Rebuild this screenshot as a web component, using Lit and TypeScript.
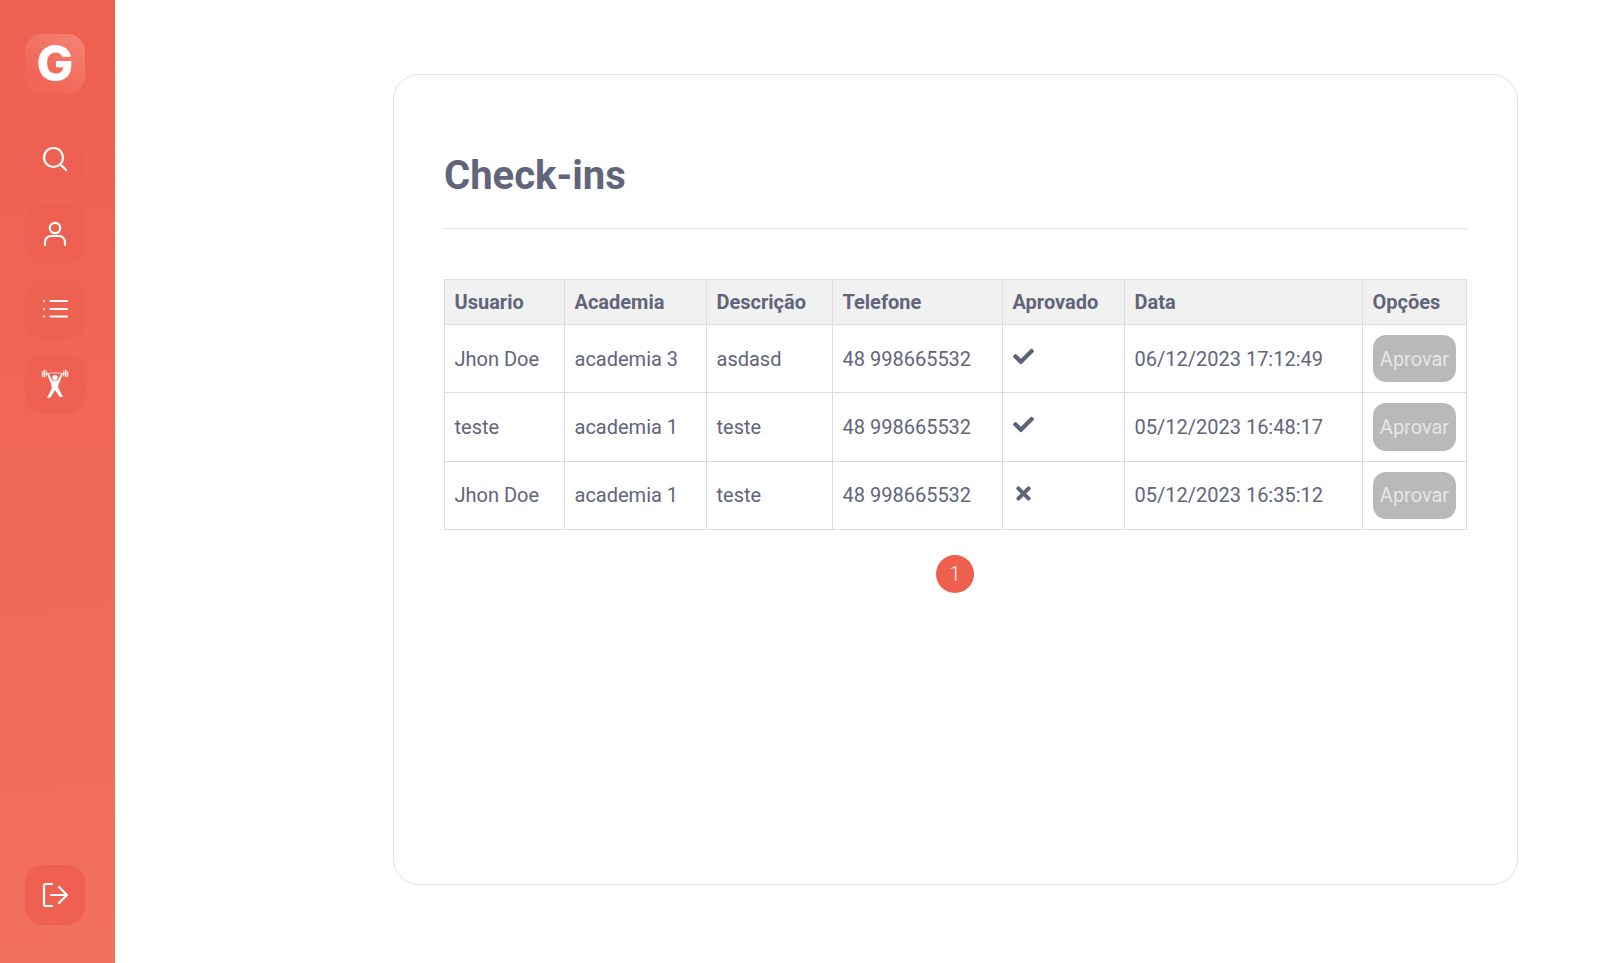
import { LitElement, css, html, svg } from 'lit'
import { customElement, property } from 'lit/decorators.js'

const icons = {
  search: svg`<circle cx="10.5" cy="10.5" r="9.5" /><line x1="17.5" y1="17.5" x2="23" y2="23" />`,
  user: svg`<circle cx="12" cy="6" r="5.2" /><path d="M2 23v-3a6 6 0 0 1 6-6h8a6 6 0 0 1 6 6v3" />`,
  list: svg`<line x1="7.5" y1="4" x2="24" y2="4" /><line x1="7.5" y1="12" x2="24" y2="12" /><line x1="7.5" y1="19.5" x2="24" y2="19.5" /><line x1="1" y1="4" x2="1.1" y2="4" /><line x1="1" y1="12" x2="1.1" y2="12" /><line x1="1" y1="19.5" x2="1.1" y2="19.5" />`,
  logout: svg`<path d="M9 1H3a2 2 0 0 0-2 2v18a2 2 0 0 0 2 2h6" /><line x1="8" y1="12" x2="23.5" y2="12" /><path d="M16 4l8 8-8 8" />`,
}

const gymIcon = svg`
  <g fill="#fff">
    <circle cx="15" cy="8.6" r="2.6" />
    <path d="M7 4.4h1.6l3.8 7.1h5.2l3.8-7.1H23l-4.3 10.6-.7 3.2 4.9 9.8h-3.2L15 21l-4.7 7.8H7.1l4.9-9.8-.7-3.2z" />
    <rect x="1.8" y="2.4" width="1" height="5.4" />
    <rect x="3.6" y="0.8" width="1.4" height="7.4" />
    <rect x="5.7" y="1.6" width="1" height="5.8" />
    <rect x="23.3" y="1.6" width="1" height="5.8" />
    <rect x="25" y="0.8" width="1.4" height="7.4" />
    <rect x="27.2" y="2.4" width="1" height="5.4" />
  </g>
  <path d="M3 4.8Q15 2.6 27 4.8" fill="none" stroke="#fff" stroke-opacity=".65" stroke-width="1" />
`

@customElement('side-button')
export class SideButton extends LitElement {
  static styles = css`
    :host {
      display: block;
    }
    .btn {
      display: flex;
      align-items: center;
      justify-content: center;
      width: 60px;
      height: 60px;
      border-radius: 18px;
      background: #ee6151;
    }
    svg {
      width: 24px;
      height: 24px;
      fill: none;
      stroke: #fff;
      stroke-width: 2.2;
      stroke-linecap: round;
      stroke-linejoin: round;
      overflow: visible;
    }
    .gym {
      width: 30px;
      height: 30px;
      stroke: none;
    }
  `
  @property({ type: String })
  icon = ''

  render() {
    const gym = this.icon === 'gym'
    return html`
      <div class="btn">
        ${gym
          ? html`<svg class="gym" viewBox="0 0 30 30">${gymIcon}</svg>`
          : html`<svg viewBox="0 0 24 24">${icons[this.icon as keyof typeof icons]}</svg>`}
      </div>
    `
  }
}

const rows = [
  { user: 'Jhon Doe', gym: 'academia 3', desc: 'asdasd', phone: '48 998665532', ok: true, date: '06/12/2023 17:12:49' },
  { user: 'teste', gym: 'academia 1', desc: 'teste', phone: '48 998665532', ok: true, date: '05/12/2023 16:48:17' },
  { user: 'Jhon Doe', gym: 'academia 1', desc: 'teste', phone: '48 998665532', ok: false, date: '05/12/2023 16:35:12' },
]

@customElement('app-root')
export class AppRoot extends LitElement {
  static styles = css`
    :host {
      display: block;
      font-family: Roboto, 'Liberation Sans', sans-serif;
      color: #61657b;
    }
    .page {
      display: flex;
      height: 963px;
      overflow: hidden;
      background: #fff;
    }
    .sidebar {
      box-sizing: border-box;
      flex: 0 0 115px;
      height: 100%;
      display: flex;
      flex-direction: column;
      align-items: flex-start;
      padding: 34px 0 38px 25px;
      background: linear-gradient(172deg, #ee6050 0%, #f2705e 100%);
    }
    .logo {
      display: flex;
      align-items: center;
      justify-content: center;
      width: 60px;
      height: 60px;
      margin-bottom: 35px;
      border-radius: 18px;
      background: linear-gradient(215deg, #f68474 0%, #f16556 75%);
      color: #fff;
      font-family: Inter, Roboto, sans-serif;
      font-size: 49px;
      font-weight: 800;
      line-height: 60px;
    }
    .nav {
      display: flex;
      flex-direction: column;
      gap: 15px;
      flex: 1;
    }
    .main {
      flex: 1;
      padding: 74px 83px 0 278px;
      min-width: 0;
    }
    .card {
      box-sizing: border-box;
      height: 811px;
      padding: 50px 50px 0;
      border: 1px solid #d9e5e6;
      border-radius: 26px;
    }
    .title {
      margin: 0;
      padding: 27px 0 28px;
      border-bottom: 1px solid #d9e5e6;
      font-size: 40px;
      line-height: 48px;
      font-weight: 700;
    }
    table {
      width: 1022px;
      margin-top: 50px;
      border-collapse: collapse;
      table-layout: fixed;
      font-size: 20px;
      line-height: 24px;
    }
    th,
    td {
      box-sizing: border-box;
      padding: 10px 10px 10px 9.5px;
      border: 1px solid #dcdcdc;
      text-align: left;
      vertical-align: middle;
    }
    th {
      background: #f1f1f1;
      font-weight: 700;
    }
    .c1 { width: 120px; }
    .c2 { width: 142px; }
    .c3 { width: 126px; }
    .c4 { width: 170px; }
    .c5 { width: 122px; }
    .c6 { width: 238px; }
    .c7 { width: 104px; }
    .mark {
      display: block;
      margin-top: -4px;
      width: 21px;
      height: 21px;
      fill: #5e6278;
    }
    .approve {
      display: block;
      box-sizing: border-box;
      width: 83px;
      height: 47.33px;
      margin-left: 0.5px;
      padding: 0;
      border: none;
      border-radius: 13px;
      background: #b9b9b9;
      color: #e6e6e6;
      font: inherit;
    }
    .pages {
      display: flex;
      justify-content: center;
      margin-top: 25.5px;
      padding-right: 1px;
    }
    .page-num {
      display: flex;
      align-items: center;
      justify-content: center;
      width: 38px;
      height: 38px;
      border-radius: 50%;
      background: #ef5f50;
      color: #fff;
      font-size: 20px;
      font-weight: 300;
    }
  `

  render() {
    return html`
      <div class="page">
        <aside class="sidebar">
          <div class="logo">G</div>
          <div class="nav">
            <side-button icon="search"></side-button>
            <side-button icon="user"></side-button>
            <side-button icon="list"></side-button>
            <side-button icon="gym"></side-button>
          </div>
          <side-button icon="logout"></side-button>
        </aside>
        <main class="main">
          <section class="card">
            <h1 class="title">Check-ins</h1>
            <table>
              <thead>
                <tr>
                  <th class="c1">Usuario</th>
                  <th class="c2">Academia</th>
                  <th class="c3">Descrição</th>
                  <th class="c4">Telefone</th>
                  <th class="c5">Aprovado</th>
                  <th class="c6">Data</th>
                  <th class="c7">Opções</th>
                </tr>
              </thead>
              <tbody>
                ${rows.map(
                  (r) => html`
                    <tr>
                      <td>${r.user}</td>
                      <td>${r.gym}</td>
                      <td>${r.desc}</td>
                      <td>${r.phone}</td>
                      <td>
                        ${r.ok
                          ? html`<svg class="mark" viewBox="0 0 512 512">
                              <path
                                d="M173.898 439.404l-166.4-166.4c-9.997-9.997-9.997-26.206 0-36.204l36.203-36.204c9.997-9.998 26.207-9.998 36.204 0L192 312.69 432.095 72.596c9.997-9.997 26.207-9.997 36.204 0l36.203 36.204c9.997 9.997 9.997 26.206 0 36.204l-294.4 294.401c-9.998 9.997-26.207 9.997-36.204-.001z"
                              />
                            </svg>`
                          : html`<svg class="mark" viewBox="0 0 512 512">
                              <path
                                transform="translate(80 0)"
                                d="M242.72 256l100.07-100.07c12.28-12.28 12.28-32.19 0-44.48l-22.24-22.24c-12.28-12.28-32.19-12.28-44.48 0L176 189.28 75.93 89.21c-12.28-12.28-32.19-12.28-44.48 0L9.21 111.45c-12.28 12.28-12.28 32.19 0 44.48L109.28 256 9.21 356.07c-12.28 12.28-12.28 32.19 0 44.48l22.24 22.24c12.28 12.28 32.2 12.28 44.48 0L176 322.72l100.07 100.07c12.28 12.28 32.2 12.28 44.48 0l22.24-22.24c12.28-12.28 12.28-32.19 0-44.48L242.72 256z"
                              />
                            </svg>`}
                      </td>
                      <td>${r.date}</td>
                      <td><button class="approve">Aprovar</button></td>
                    </tr>
                  `
                )}
              </tbody>
            </table>
            <div class="pages"><span class="page-num">1</span></div>
          </section>
        </main>
      </div>
    `
  }
}
